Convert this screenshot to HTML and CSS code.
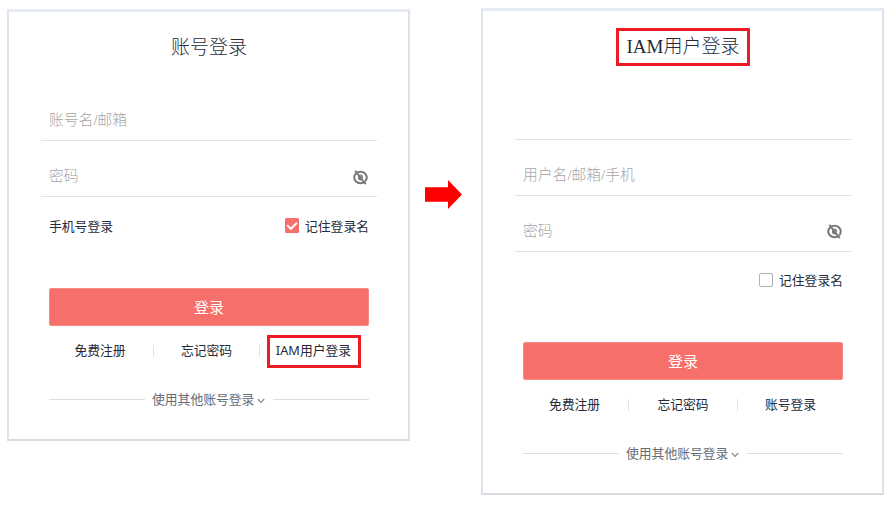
FILE: index.html
```
<!DOCTYPE html>
<html lang="zh-CN">
<head>
<meta charset="utf-8">
<title>登录</title>
<link rel="stylesheet" href="styles.css">
</head>
<body>
<svg class="defs" width="0" height="0" aria-hidden="true">
  <symbol id="eye" viewBox="0 0 15 15">
    <ellipse cx="7.5" cy="7.5" rx="6.3" ry="5.8" fill="none" stroke="#777" stroke-width="2"/>
    <ellipse cx="7.5" cy="7.5" rx="2.5" ry="3" fill="#777"/>
    <path d="M4.4 2.2L13.6 13.4" stroke="#fff" stroke-width=".5"/>
    <path d="M2.3 .9L12.7 14.1" stroke="#777" stroke-width="1.8"/>
  </symbol>
  <symbol id="chevron" viewBox="0 0 8 6">
    <path d="M.8 1L4 4.3L7.2 1" fill="none" stroke="#858a91" stroke-width="1.2"/>
  </symbol>
</svg>
<main class="stage">
  <section class="card account">
    <h1 class="title"><span class="name">账号登录</span></h1>
    <div class="field"><span>账号名/邮箱</span></div>
    <div class="field"><span>密码</span><svg class="eye"><use href="#eye"/></svg></div>
    <div class="options">
      <a class="phone">手机号登录</a>
      <label class="remember"><svg class="check" viewBox="0 0 14 15"><rect width="14" height="15" rx="1.5" fill="#f76f6b"/><path d="M2.2 7.2L5.8 10.8L12 4.8" fill="none" stroke="#fff" stroke-width="1.9"/></svg><span>记住登录名</span></label>
    </div>
    <div class="button">登录</div>
    <nav class="links"><a>免费注册</a><i></i><a>忘记密码</a><i></i><a class="marked">IAM用户登录</a></nav>
    <div class="others"><span>使用其他账号登录</span><svg class="chevron"><use href="#chevron"/></svg></div>
  </section>
  <svg class="arrow" viewBox="0 0 37 29"><path d="M0 7.3H23V0L37 14.5L23 29V21.7H0Z" fill="#f00"/></svg>
  <section class="card iam">
    <h1 class="title"><span class="name marked">IAM用户登录</span></h1>
    <div class="field"></div>
    <div class="field"><span>用户名/邮箱/手机</span></div>
    <div class="field"><span>密码</span><svg class="eye"><use href="#eye"/></svg></div>
    <div class="options">
      <label class="remember"><span class="box"></span><span>记住登录名</span></label>
    </div>
    <div class="button">登录</div>
    <nav class="links"><a>免费注册</a><i></i><a>忘记密码</a><i></i><a>账号登录</a></nav>
    <div class="others"><span>使用其他账号登录</span><svg class="chevron"><use href="#chevron"/></svg></div>
  </section>
</main>
</body>
</html>
```
FILE: styles.css
```
* { box-sizing: border-box; }
body {
  margin: 0;
  background: #fff;
  color: #252b3a;
  font: 12.8px/20px "Noto Sans", "Noto Sans CJK SC", sans-serif;
}
.defs { display: block; }
.stage {
  display: flex;
  align-items: flex-start;
  height: 506px;
  padding: 8px 0 0 7px;
  overflow: hidden;
}
.card {
  display: flex;
  flex-direction: column;
  flex: none;
  width: 403px;
  padding: 0 31px 0 32px;
  border: solid;
  border-width: 3px 2px 2px;
  border-color: #e5eaf3 #dce2ec #d6dbe1 #dfe4eb;
}
.account { height: 432px; margin-top: 1px; }
.iam { height: 487px; }
.title {
  display: flex;
  align-items: center;
  justify-content: center;
  height: 73px;
  margin: 0;
  padding-bottom: 1px;
  font: 300 19px/30px "Liberation Serif", "Noto Sans CJK SC", serif;
}
.iam .title { padding-bottom: 2px; }
.name.marked {
  height: 38px;
  width: 134px;
  line-height: 31px;
}
.marked {
  border: 3px solid #ed1c24;
  text-align: center;
  white-space: nowrap;
}
.field {
  display: flex;
  justify-content: space-between;
  align-items: center;
  width: 336px;
  height: 56px;
  padding: 14px 9px 0 8px;
  border-bottom: 1px solid #dfe1e6;
  color: #a5a5a5;
  font: 300 14.8px/22px "Liberation Serif", "Noto Sans CJK SC", serif;
}
.eye { width: 15px; height: 15px; margin-top: 4px; }
.iam .eye { margin-top: 2px; }
.options {
  display: flex;
  align-items: center;
  justify-content: space-between;
  width: 328px;
  height: 57px;
  padding-left: 8px;
}
.iam .options { height: 55px; justify-content: flex-end; }
.remember { display: flex; align-items: center; gap: 6px; }
.check { width: 14px; height: 15px; }
.box {
  width: 14px;
  height: 14px;
  border: 1px solid #adb0b8;
  border-radius: 2px;
}
.button {
  width: 320px;
  height: 38px;
  margin: 34px 0 0 8px;
  border: 1px solid #f88984;
  border-radius: 2px;
  background: #f76f6b;
  color: #fff;
  font-size: 15px;
  line-height: 36px;
  text-align: center;
}
.iam .button { margin-top: 35px; }
.links {
  display: grid;
  grid-template-columns: 104px 1px 105px 1px 109px;
  align-items: center;
  justify-items: center;
  width: 320px;
  height: 50px;
  margin-left: 8px;
}
.iam .links { grid-template-columns: 105px 1px 108px 1px 105px; }
.links a { margin-bottom: 2px; }
.links a:first-child { margin-right: 2px; }
.links i { width: 1px; height: 12px; background: #dfe1e6; }
.links .marked { width: 94px; height: 33px; margin: 0 2px 0 0; line-height: 25px; }
.others {
  display: flex;
  align-items: center;
  width: 320px;
  height: 47px;
  margin-left: 8px;
  color: #666c76;
}
.others::before, .others::after {
  content: "";
  flex: none;
  width: 96px;
  height: 1px;
  background: #dcdee2;
}
.others span { margin: 0 0 2px 7px; }
.chevron { width: 8px; height: 6px; margin: 2px auto 0 3px; }
.arrow { flex: none; width: 37px; height: 29px; margin: 172px 19px 0 15px; }
```
